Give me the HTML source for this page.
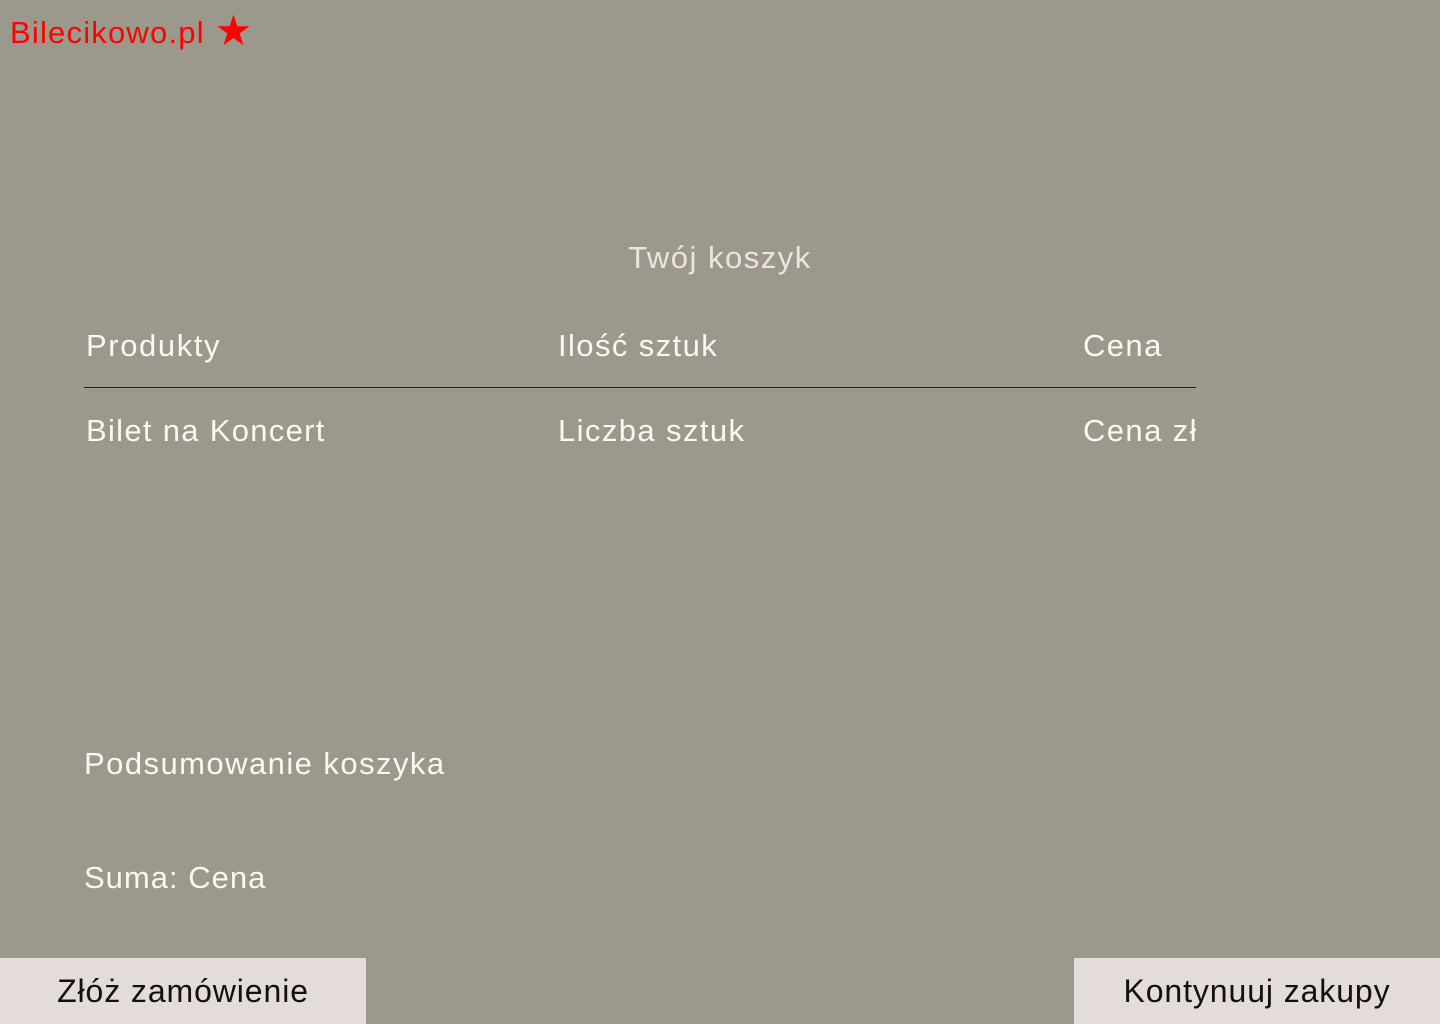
<!DOCTYPE html>
<html><head><meta charset="utf-8"><style>
html,body{margin:0;padding:0;}
body{width:1440px;height:1024px;background:#9b998b;position:relative;overflow:hidden;font-family:"Liberation Sans","DejaVu Sans",sans-serif;}
.a{position:absolute;white-space:nowrap;line-height:1;}
.w{color:#fbf7f5;font-size:31px;letter-spacing:1.4px;}
.btn{position:absolute;top:958px;height:66px;width:366px;background:#e4dcdb;color:#111;font-size:32px;display:flex;align-items:center;justify-content:center;letter-spacing:0.9px;}
</style></head><body>
<div class="a" style="left:10px;top:8px;color:#ff0000;font-size:31px;letter-spacing:1.2px;">Bilecikowo.pl <span style="font-size:42px;position:relative;top:2px;">★</span></div>
<div class="a" style="left:0;width:1440px;text-align:center;top:242px;color:#ede4e1;font-size:31px;letter-spacing:1.5px;">Twój koszyk</div>
<div class="a w" style="left:86px;top:330px;letter-spacing:1.6px;">Produkty</div>
<div class="a w" style="left:558px;top:330px;">Ilość sztuk</div>
<div class="a w" style="left:1083px;top:330px;">Cena</div>
<div style="position:absolute;left:84px;top:387px;width:1112px;height:1px;background:#222;"></div>
<div class="a w" style="left:86px;top:415px;letter-spacing:1.3px;">Bilet na Koncert</div>
<div class="a w" style="left:558px;top:415px;">Liczba sztuk</div>
<div class="a w" style="left:1083px;top:415px;width:113px;overflow:hidden;">Cena zł</div>
<div class="a w" style="left:84px;top:748px;letter-spacing:1.45px;">Podsumowanie koszyka</div>
<div class="a w" style="left:84px;top:862px;letter-spacing:1px;">Suma: Cena</div>
<div class="btn" style="left:0;">Złóż zamówienie</div>
<div class="btn" style="left:1074px;">Kontynuuj zakupy</div>
</body></html>
